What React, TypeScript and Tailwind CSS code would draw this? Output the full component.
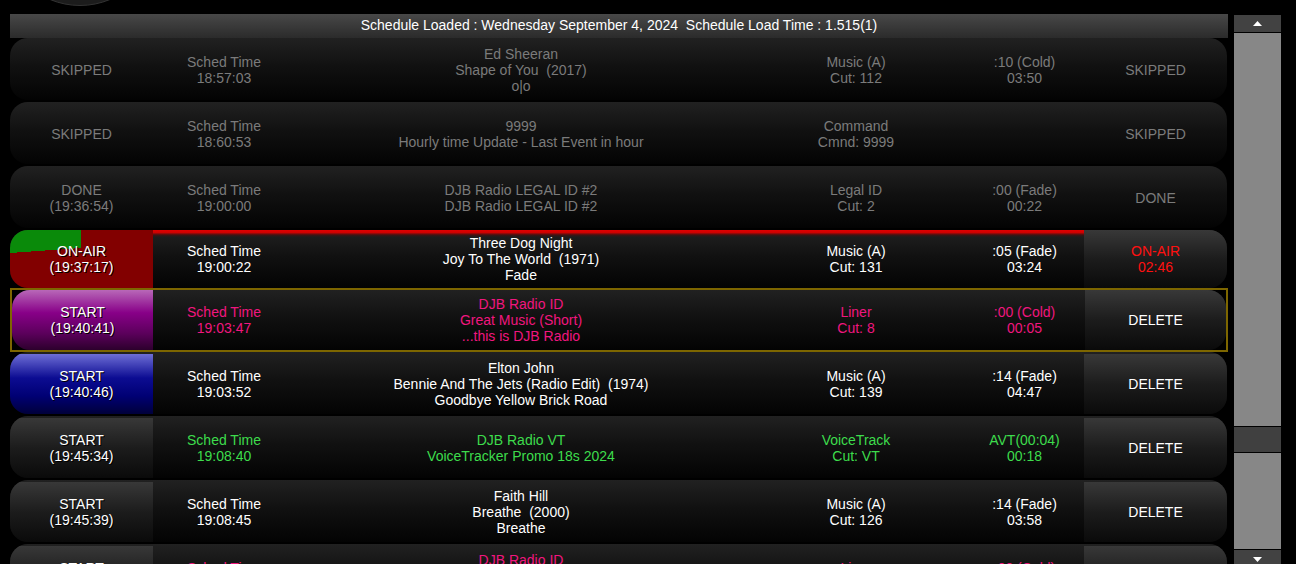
type Tone = "dim" | "white" | "pink" | "green" | "red";

type Row = {
  kind: "skipped" | "done" | "onair" | "cued" | "next" | "start";
  status: string[];
  sched: string[];
  title: string[];
  type: string[];
  timing: string[];
  action: string[];
  tone: Tone;
  actionTone?: Tone;
};

const rows: Row[] = [
  {
    kind: "skipped",
    status: ["SKIPPED"],
    sched: ["Sched Time", "18:57:03"],
    title: ["Ed Sheeran", "Shape of You  (2017)", "o|o"],
    type: ["Music (A)", "Cut: 112"],
    timing: [":10 (Cold)", "03:50"],
    action: ["SKIPPED"],
    tone: "dim",
  },
  {
    kind: "skipped",
    status: ["SKIPPED"],
    sched: ["Sched Time", "18:60:53"],
    title: ["9999", "Hourly time Update - Last Event in hour"],
    type: ["Command", "Cmnd: 9999"],
    timing: [],
    action: ["SKIPPED"],
    tone: "dim",
  },
  {
    kind: "done",
    status: ["DONE", "(19:36:54)"],
    sched: ["Sched Time", "19:00:00"],
    title: ["DJB Radio LEGAL ID #2", "DJB Radio LEGAL ID #2"],
    type: ["Legal ID", "Cut: 2"],
    timing: [":00 (Fade)", "00:22"],
    action: ["DONE"],
    tone: "dim",
  },
  {
    kind: "onair",
    status: ["ON-AIR", "(19:37:17)"],
    sched: ["Sched Time", "19:00:22"],
    title: ["Three Dog Night", "Joy To The World  (1971)", "Fade"],
    type: ["Music (A)", "Cut: 131"],
    timing: [":05 (Fade)", "03:24"],
    action: ["ON-AIR", "02:46"],
    tone: "white",
    actionTone: "red",
  },
  {
    kind: "cued",
    status: ["START", "(19:40:41)"],
    sched: ["Sched Time", "19:03:47"],
    title: ["DJB Radio ID", "Great Music (Short)", "...this is DJB Radio"],
    type: ["Liner", "Cut: 8"],
    timing: [":00 (Cold)", "00:05"],
    action: ["DELETE"],
    tone: "pink",
    actionTone: "white",
  },
  {
    kind: "next",
    status: ["START", "(19:40:46)"],
    sched: ["Sched Time", "19:03:52"],
    title: [
      "Elton John",
      "Bennie And The Jets (Radio Edit)  (1974)",
      "Goodbye Yellow Brick Road",
    ],
    type: ["Music (A)", "Cut: 139"],
    timing: [":14 (Fade)", "04:47"],
    action: ["DELETE"],
    tone: "white",
  },
  {
    kind: "start",
    status: ["START", "(19:45:34)"],
    sched: ["Sched Time", "19:08:40"],
    title: ["DJB Radio VT", "VoiceTracker Promo 18s 2024"],
    type: ["VoiceTrack", "Cut: VT"],
    timing: ["AVT(00:04)", "00:18"],
    action: ["DELETE"],
    tone: "green",
    actionTone: "white",
  },
  {
    kind: "start",
    status: ["START", "(19:45:39)"],
    sched: ["Sched Time", "19:08:45"],
    title: ["Faith Hill", "Breathe  (2000)", "Breathe"],
    type: ["Music (A)", "Cut: 126"],
    timing: [":14 (Fade)", "03:58"],
    action: ["DELETE"],
    tone: "white",
  },
  {
    kind: "start",
    status: ["START", "(19:45:44)"],
    sched: ["Sched Time", "19:08:50"],
    title: ["DJB Radio ID", "Great Music (Short)", "...this is DJB Radio"],
    type: ["Liner", "Cut: 8"],
    timing: [":00 (Cold)", "00:05"],
    action: ["DELETE"],
    tone: "pink",
    actionTone: "white",
  },
];

const toneClass: Record<Tone, string> = {
  dim: "text-[#7b7b7b]",
  white: "text-white",
  pink: "text-[#f0167f]",
  green: "text-[#3ddc4c]",
  red: "text-[#ff1010]",
};

const statusBg: Record<Row["kind"], string> = {
  skipped: "",
  done: "",
  onair:
    "bg-[conic-gradient(from_0deg_at_50%_31%,#820000_0deg_266deg,#0a8a0a_266deg_360deg)]",
  cued: "bg-[linear-gradient(to_bottom,#b868b8_0%,#880088_38%,#5c005c_72%,#2c002c_100%)]",
  next: "bg-[linear-gradient(to_bottom,#6e6ed6_0%,#0c0c92_40%,#000074_70%,#00003a_100%)]",
  start: "bg-[linear-gradient(to_bottom,#3b3b3b_0%,#1c1c1c_50%,#0b0b0b_100%)]",
};

function Cell({
  lines,
  width,
  tone,
  shadow,
  className = "",
}: {
  lines: string[];
  width: string;
  tone: Tone;
  shadow?: boolean;
  className?: string;
}) {
  return (
    <div
      className={`${width} relative flex shrink-0 flex-col items-center justify-center whitespace-pre text-center ${toneClass[tone]} ${
        shadow ? "[text-shadow:1px_1px_0_#000]" : ""
      } ${className}`}
    >
      {lines.map((l, i) => (
        <span key={i}>{l}</span>
      ))}
    </div>
  );
}

function ScheduleRow({ row }: { row: Row }) {
  const active = row.kind !== "skipped" && row.kind !== "done";
  const cued = row.kind === "cued";
  const sideBg = active
    ? "bg-[linear-gradient(to_bottom,#383838_0%,#1c1c1c_50%,#0a0a0a_100%)]"
    : "";
  const sideW = cued ? "w-[141px]" : "w-[143px]";

  const body = (
    <div
      className={`flex flex-1 overflow-hidden rounded-[18px] bg-[linear-gradient(to_bottom,#212121_0%,#111111_45%,#030303_100%)] ${
        row.kind === "onair" || cued ? "" : "pt-[2px]"
      }`}
    >
      <Cell
        lines={row.status}
        width={sideW}
        tone={row.tone === "dim" ? "dim" : "white"}
        shadow={active}
        className={row.kind === "start" ? sideBg : statusBg[row.kind]}
      />
      <div className="relative flex flex-1">
        {row.kind === "onair" && (
          <div className="absolute inset-x-0 top-0 h-[7px] bg-[linear-gradient(to_bottom,#e00000_0%,#d00000_35%,rgba(120,0,0,0.4)_70%,transparent_100%)]" />
        )}
        <Cell lines={row.sched} width="w-[142px]" tone={row.tone} />
        <Cell lines={row.title} width="w-[452px]" tone={row.tone} />
        <Cell lines={row.type} width="w-[218px]" tone={row.tone} />
        <Cell lines={row.timing} width="w-[119px]" tone={row.tone} />
      </div>
      <Cell
        lines={row.action}
        width={sideW}
        tone={row.actionTone ?? row.tone}
        className={sideBg}
      />
    </div>
  );

  if (cued) {
    // selected row: square gold frame around the rounded row
    return (
      <div className="flex h-[64px] w-[1218px] shrink-0 border-2 border-[#7d6600]">
        {body}
      </div>
    );
  }

  return (
    <div
      className={`flex shrink-0 ${row.kind === "onair" ? "h-[58px]" : "mb-[2px] h-[62px]"}`}
    >
      {body}
    </div>
  );
}

function Arrow({ down }: { down?: boolean }) {
  return (
    <svg width="9" height="5" viewBox="0 0 9 5" className="fill-white">
      <path d={down ? "M0 0 H9 L4.5 5 Z" : "M0 5 H9 L4.5 0 Z"} />
    </svg>
  );
}

export default function App() {
  return (
    <div className="relative h-[564px] w-[1296px] overflow-hidden bg-black font-['Liberation_Sans',Arial,sans-serif] text-[14px] leading-4">
      {/* clock dial peeking in from above */}
      <div className="absolute left-[2px] top-[-150px] h-[156px] w-[156px] rounded-full border border-[#333] bg-[#1c1c1c]" />

      <div className="flex pl-[10px] pt-[14px]">
        <div className="flex w-[1218px] flex-col">
          <div className="flex h-[24px] items-center justify-center whitespace-pre bg-[linear-gradient(to_bottom,#484848,#2b2b2b)] pb-[3px] text-white">
            Schedule Loaded : Wednesday September 4, 2024  Schedule Load Time : 1.515(1)
          </div>
          <div className="flex w-[1217px] flex-col">
            {rows.map((r, i) => (
              <ScheduleRow key={i} row={r} />
            ))}
          </div>
        </div>

        {/* scrollbar */}
        <div className="ml-[6px] mt-px flex h-[560px] w-[47px] flex-col">
          <div className="flex h-[17px] items-center justify-center bg-[#424242]">
            <Arrow />
          </div>
          <div className="h-px bg-black" />
          <div className="h-[393px] bg-[#878787]" />
          <div className="h-px bg-black" />
          <div className="h-[25px] bg-[#404040]" />
          <div className="h-px bg-black" />
          <div className="h-[96px] bg-[#878787]" />
          <div className="h-px bg-black" />
          <div className="flex h-[17px] items-start justify-center bg-[#424242] pt-[7px]">
            <Arrow down />
          </div>
        </div>
      </div>
    </div>
  );
}
